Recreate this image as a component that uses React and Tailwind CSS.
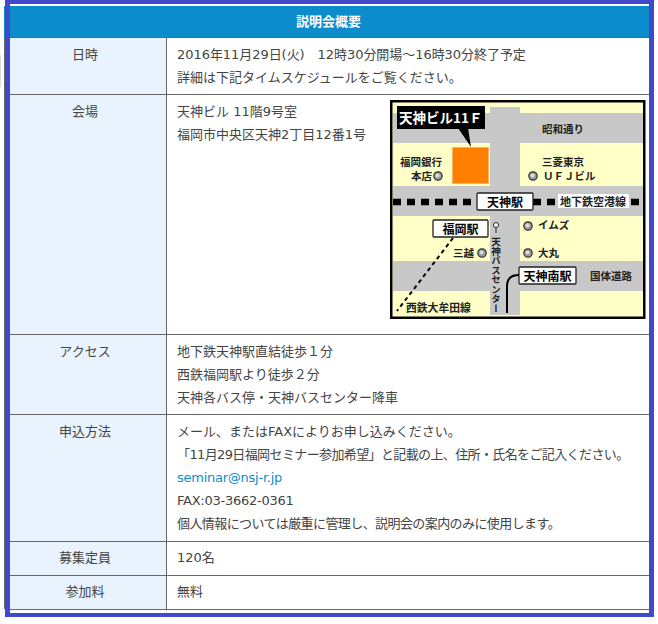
const F = '"DejaVu Sans", "Noto Sans CJK JP", sans-serif';
const M = '"Noto Sans CJK JP", sans-serif';

function Row({ label, h, tight, children }) {
  return (
    <div className="flex border-b border-[#666666]" style={{ height: h }}>
      <div className={tight ? "w-[157px] shrink-0 bg-[#e8f3fe] border-r border-[#666666] text-center pt-[4px] pr-[6px]" : "w-[157px] shrink-0 bg-[#e8f3fe] border-r border-[#666666] text-center pt-[5px] pr-[6px]"}>{label}</div>
      <div className={tight ? "flex-1 min-w-0 pl-[10px] pt-[4px] whitespace-nowrap" : "flex-1 min-w-0 pl-[10px] pt-[5px] whitespace-nowrap"}>{children}</div>
    </div>
  );
}

function Dot({ x, y }) {
  return (
    <g>
      <circle cx={x} cy={y} r="4.2" fill="#999" stroke="#333" strokeWidth="1.2" />
      <circle cx={x - 0.5} cy={y - 0.5} r="2" fill="#ddd" />
    </g>
  );
}

function Label({ x, y, w, h, text, size = 12 }) {
  return (
    <g>
      <rect x={x} y={y} width={w} height={h} fill="#fff" stroke="#222" strokeWidth="1.3" rx="1" />
      <text x={x + w / 2} y={y + h - 3.5} textAnchor="middle" fontSize={size} fontWeight="700" fill="#000">{text}</text>
    </g>
  );
}

function Map() {
  const T = (x, y, s, opts = {}) => (
    <text x={x} y={y} fontSize={opts.size || 10.5} fontWeight={opts.weight || 700} fill="#222" textAnchor={opts.anchor || 'start'} letterSpacing={opts.ls}>{s}</text>
  );
  return (
    <svg width="256" height="220" viewBox="0 0 256 220" className="block" style={{ fontFamily: M }}>
      <rect x="1.25" y="1.25" width="253" height="216.5" fill="#ffffc8" stroke="#000" strokeWidth="2.5" />
      <rect x="3" y="13" width="250" height="30" fill="#c8c8c8" />
      <rect x="3" y="86" width="250" height="30" fill="#c8c8c8" />
      <rect x="3" y="161" width="250" height="30" fill="#c8c8c8" />
      <rect x="100" y="7" width="30" height="208" fill="#c8c8c8" />
      <line x1="3" y1="102" x2="253" y2="102" stroke="#000" strokeWidth="6.5" strokeDasharray="8 6" />
      <path d="M68 28 L81 47 L78 28 Z" fill="#000" />
      <rect x="62.5" y="47.5" width="36" height="36" fill="#ff8000" stroke="#ffb060" />
      <rect x="7" y="6" width="88" height="23" fill="#000" />
      <text x="9" y="23" fontSize="13.5" fontWeight="700" fill="#fff">天神ビル11Ｆ</text>
      {T(152, 33, '昭和通り')}
      {T(10, 66, '福岡銀行')}
      {T(21, 80, '本店')}
      <Dot x={48} y={76} />
      {T(152, 66, '三菱東京')}
      <Dot x={143} y={76} />
      {T(153, 80, 'ＵＦＪビル')}
      <rect x="168" y="94" width="71" height="14" fill="#fff" />
      {T(170, 106, '地下鉄空港線', { size: 11 })}
      <Label x={87} y={93} w={56} h={17} text="天神駅" />
      <line x1="63" y1="138" x2="7" y2="211" stroke="#000" strokeWidth="2" strokeDasharray="4 3.5" />
      <Label x={43} y={120} w={55} h={17} text="福岡駅" />
      {T(63, 157, '三越')}
      <Dot x={92} y={153} />
      <circle cx="106" cy="125" r="2.5" fill="#fff" stroke="#222" />
      <line x1="106" y1="128" x2="106" y2="133" stroke="#222" />
      <text x="106" y="137" fontSize="9.5" fontWeight="700" fill="#222" style={{ writingMode: 'vertical-rl' }}>天神バスセンター</text>
      <Dot x={138} y={126} />
      {T(148, 129, 'イムズ')}
      <Dot x={138} y={153} />
      {T(148, 157, '大丸')}
      <path d="M117 213 V186 Q117 175 129 175" fill="none" stroke="#000" strokeWidth="2" />
      <Label x={129} y={167} w={57} h={17} text="天神南駅" />
      {T(200, 180, '国体道路')}
      {T(16, 212, '西鉄大牟田線', { size: 10.8 })}
    </svg>
  );
}

export default function App() {
  return (
    <div className="relative h-[624px] w-[658px] bg-white overflow-hidden text-[13px] leading-[23px] text-[#444444]" style={{ fontFamily: F }}>
      <div className="absolute left-0 top-[55px] h-[32px] w-px bg-[#dddddd]" />
      <div className="absolute left-[4px] top-[37px] h-[572px] w-px bg-[#666666]" />
      <div className="absolute left-[4px] top-[6px] h-[31px] w-px bg-[#0b8ccb]" />
      <div className="ml-[5px] w-[649px] h-[617px] border-x-[5px] border-y-[4px] border-[#4048cc] pt-[2px] bg-white">
        <div className="h-[32px] bg-[#0b8ccb] text-white font-bold text-center leading-[31px] border-b border-[#666666] pr-[2px]">説明会概要</div>
        <Row label="日時" h={57}>
          <div className="tracking-[-0.05px]">2016年11月29日(火)　12時30分開場～16時30分終了予定</div>
          <div>詳細は下記タイムスケジュールをご覧ください。</div>
        </Row>
        <Row label="会場" h={240}>
          <div className="flex justify-between pr-[3px]">
            <div>
              <div>天神ビル 11階9号室</div>
              <div>福岡市中央区天神2丁目12番1号</div>
            </div>
            <Map />
          </div>
        </Row>
        <Row label="アクセス" h={80}>
          <div>地下鉄天神駅直結徒歩１分</div>
          <div>西鉄福岡駅より徒歩２分</div>
          <div>天神各バス停・天神バスセンター降車</div>
        </Row>
        <Row label="申込方法" h={127}>
          <div>メール、またはFAXによりお申し込みください。</div>
          <div className="tracking-[-0.62px]">「11月29日福岡セミナー参加希望」と記載の上、住所・氏名をご記入ください。</div>
          <div className="text-[#0b8ccb] tracking-[-0.25px]">seminar@nsj-r.jp</div>
          <div className="tracking-[-0.25px]">FAX:03-3662-0361</div>
          <div className="tracking-[-0.58px]">個人情報については厳重に管理し、説明会の案内のみに使用します。</div>
        </Row>
        <Row label="募集定員" h={34} tight>120名</Row>
        <Row label="参加料" h={34} tight>無料</Row>
      </div>
    </div>
  );
}
